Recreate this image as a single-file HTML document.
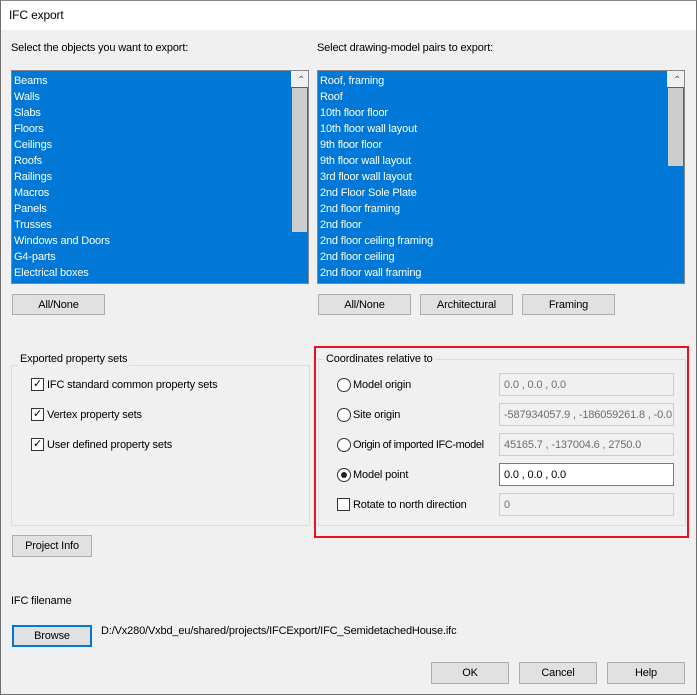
<!DOCTYPE html>
<html><head><style>
*{box-sizing:border-box;margin:0;padding:0}
body{width:697px;height:695px;background:#f0f0f0;font-family:"Liberation Sans",sans-serif;font-size:11px;color:#000;position:relative;overflow:hidden;letter-spacing:-0.15px}
.a{position:absolute;white-space:nowrap;line-height:16px}
.win{position:absolute;left:0;top:0;width:697px;height:695px;border:1px solid #6f6f6f;border-top-color:#888}
.title{position:absolute;left:1px;top:1px;width:695px;height:29px;background:#fff}
.list{position:absolute;background:#0078d7;border:1px solid #828790;overflow:hidden;color:#fff;padding-top:2px}
.list div{height:16px;line-height:16px;padding-left:2px}
.sb{position:absolute;right:0;top:0;width:17px;height:100%;background:#f0f0f0}
.thumb{position:absolute;left:1px;width:15px;background:#cdcdcd}
.btn{position:absolute;background:#e1e1e1;border:1px solid #adadad;text-align:center;line-height:21px}
.grp{position:absolute;border:1px solid #dcdcdc}
.cb{position:absolute;width:13px;height:13px;border:1px solid #333;background:#fff}
.rd{position:absolute;width:14px;height:14px;border:1px solid #333;border-radius:50%;background:#fff}
.tb{position:absolute;width:175px;height:23px;border:1px solid #ccc;background:#f0f0f0;color:#6d6d6d;padding:4px 4px;line-height:15px;overflow:hidden;white-space:nowrap}
</style></head><body>
<div class="win"></div>
<div class="title"></div>
<div class="a" style="left:9px;top:7px;font-size:12px">IFC export</div>

<div class="a" style="left:11px;top:40px">Select the objects you want to export:</div>
<div class="a" style="left:317px;top:40px">Select drawing-model pairs to export:</div>

<div class="list" style="left:11px;top:70px;width:298px;height:214px">
<div>Beams</div><div>Walls</div><div>Slabs</div><div>Floors</div><div>Ceilings</div><div>Roofs</div><div>Railings</div><div>Macros</div><div>Panels</div><div>Trusses</div><div>Windows and Doors</div><div>G4-parts</div><div>Electrical boxes</div><div>Parts</div>
<div class="sb"><div class="a" style="left:4px;top:2px;color:#606060;font-size:10px">&#8963;</div><div class="thumb" style="top:17px;height:144px"></div><div class="a" style="left:4px;top:196px;color:#606060;font-size:10px">&#8964;</div></div>
</div>
<div class="list" style="left:317px;top:70px;width:368px;height:214px">
<div>Roof, framing</div><div>Roof</div><div>10th floor floor</div><div>10th floor wall layout</div><div>9th floor floor</div><div>9th floor wall layout</div><div>3rd floor wall layout</div><div>2nd Floor Sole Plate</div><div>2nd floor framing</div><div>2nd floor</div><div>2nd floor ceiling framing</div><div>2nd floor ceiling</div><div>2nd floor wall framing</div><div>2nd floor wall</div>
<div class="sb"><div class="a" style="left:4px;top:2px;color:#606060;font-size:10px">&#8963;</div><div class="thumb" style="top:17px;height:78px"></div><div class="a" style="left:4px;top:196px;color:#606060;font-size:10px">&#8964;</div></div>
</div>

<div class="btn" style="left:12px;top:294px;width:93px;height:21px">All/None</div>
<div class="btn" style="left:318px;top:294px;width:93px;height:21px">All/None</div>
<div class="btn" style="left:420px;top:294px;width:93px;height:21px">Architectural</div>
<div class="btn" style="left:522px;top:294px;width:93px;height:21px">Framing</div>

<div class="grp" style="left:11px;top:365px;width:299px;height:161px"></div>
<div class="a" style="left:18px;top:351px;background:#f0f0f0;padding:0 2px">Exported property sets</div>
<div class="cb" style="left:31px;top:378px"></div><div class="a" style="left:33px;top:376px">&#10003;</div><div class="a" style="left:47px;top:377px">IFC standard common property sets</div>
<div class="cb" style="left:31px;top:408px"></div><div class="a" style="left:33px;top:406px">&#10003;</div><div class="a" style="left:47px;top:407px">Vertex property sets</div>
<div class="cb" style="left:31px;top:438px"></div><div class="a" style="left:33px;top:436px">&#10003;</div><div class="a" style="left:47px;top:437px">User defined property sets</div>

<div class="a" style="left:314px;top:346px;width:375px;height:192px;border:2px solid #e81123"></div>
<div class="grp" style="left:318px;top:359px;width:368px;height:167px"></div>
<div class="a" style="left:324px;top:351px;background:#f0f0f0;padding:0 2px">Coordinates relative to</div>

<div class="rd" style="left:337px;top:378px"></div><div class="a" style="left:353px;top:377px">Model origin</div>
<div class="tb" style="left:499px;top:373px">0.0 , 0.0 , 0.0</div>
<div class="rd" style="left:337px;top:408px"></div><div class="a" style="left:353px;top:407px">Site origin</div>
<div class="tb" style="left:499px;top:403px">-587934057.9 , -186059261.8 , -0.0</div>
<div class="rd" style="left:337px;top:438px"></div><div class="a" style="left:353px;top:437px;letter-spacing:-0.4px">Origin of imported IFC-model</div>
<div class="tb" style="left:499px;top:433px">45165.7 , -137004.6 , 2750.0</div>
<div class="rd" style="left:337px;top:468px"></div><div class="a" style="left:341px;top:472px;width:6px;height:6px;border-radius:50%;background:#222"></div><div class="a" style="left:353px;top:467px">Model point</div>
<div class="tb" style="left:499px;top:463px;background:#fff;border-color:#7a7a7a;color:#000">0.0 , 0.0 , 0.0</div>
<div class="cb" style="left:337px;top:498px;border-color:#333"></div><div class="a" style="left:353px;top:497px">Rotate to north direction</div>
<div class="tb" style="left:499px;top:493px">0</div>

<div class="btn" style="left:12px;top:535px;width:80px;height:22px">Project Info</div>
<div class="a" style="left:11px;top:593px">IFC filename</div>
<div class="btn" style="left:12px;top:625px;width:80px;height:22px;border:2px solid #0078d7;line-height:19px">Browse</div>
<div class="a" style="left:101px;top:623px">D:/Vx280/Vxbd_eu/shared/projects/IFCExport/IFC_SemidetachedHouse.ifc</div>

<div class="btn" style="left:431px;top:662px;width:78px;height:22px">OK</div>
<div class="btn" style="left:519px;top:662px;width:78px;height:22px">Cancel</div>
<div class="btn" style="left:607px;top:662px;width:78px;height:22px">Help</div>
</body></html>
